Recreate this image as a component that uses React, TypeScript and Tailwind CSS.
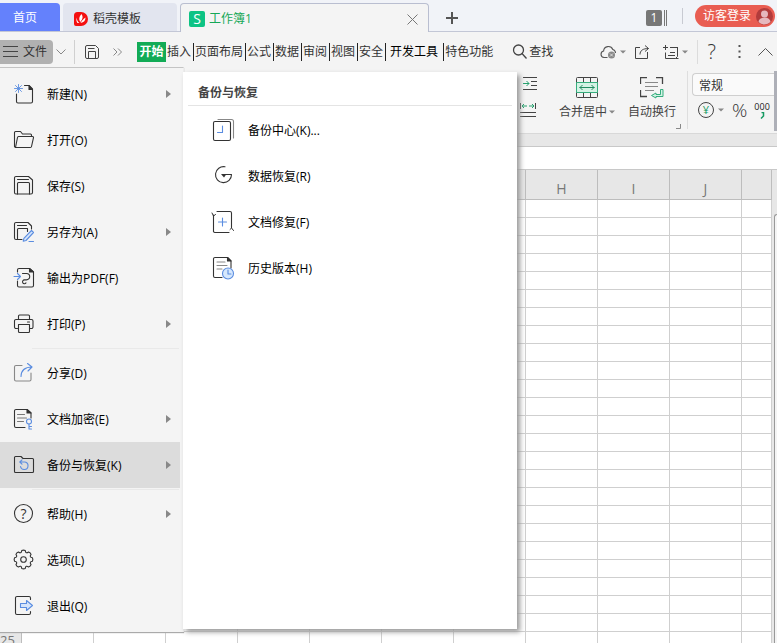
import React, { useState } from 'react';

type IconProps = { name: string };

const MENU_GROUPS = [
  [
    { icon: 'new', label: '新建(N)', more: true },
    { icon: 'open', label: '打开(O)' },
    { icon: 'save', label: '保存(S)' },
    { icon: 'saveAs', label: '另存为(A)', more: true },
    { icon: 'pdf', label: '输出为PDF(F)' },
    { icon: 'print', label: '打印(P)', more: true },
  ],
  [
    { icon: 'share', label: '分享(D)' },
    { icon: 'encrypt', label: '文档加密(E)', more: true },
    { icon: 'backup', label: '备份与恢复(K)', more: true },
  ],
  [
    { icon: 'help', label: '帮助(H)', more: true },
    { icon: 'options', label: '选项(L)' },
    { icon: 'exit', label: '退出(Q)' },
  ],
];

const BACKUP_ITEMS = [
  { icon: 'center', label: '备份中心(K)...' },
  { icon: 'recover', label: '数据恢复(R)' },
  { icon: 'repair', label: '文档修复(F)' },
  { icon: 'history', label: '历史版本(H)' },
];

const RIBBON_TABS = ['插入', '页面布局', '公式', '数据', '审阅', '视图', '安全', '开发工具', '特色功能'];
const COLUMNS = ['A', 'B', 'C', 'D', 'E', 'F', 'G', 'H', 'I', 'J', ''];
const ROWS = Array.from({ length: 25 }, (_, i) => i + 1);

// 8-tooth gear outline around (10.5, 10.5)
const GEAR = Array.from({ length: 8 }, (_, i) => {
  const at = (deg: number, r: number) => {
    const a = ((i * 45 + deg) * Math.PI) / 180;
    return `${(10.5 + r * Math.cos(a)).toFixed(2)} ${(10.5 + r * Math.sin(a)).toFixed(2)}`;
  };
  return `${i === 0 ? 'M' : 'L'}${at(-11, 9.1)} Q${at(0, 9.8)} ${at(11, 9.1)} Q${at(22.5, 5.9)} ${at(34, 9.1)}`;
}).join(' ') + ' Z';

const BLUE = '#5b8de0';

const MENU_ICONS: Record<string, React.ReactNode> = {
  new: (
    <>
      <path d="M11.500 2.500h4.500l3.500 3.500v12.500a1.500 1.500 0 0 1-1.500 1.500H5a1.500 1.500 0 0 1-1.500-1.500V11" />
      <path d="M16 2.500v4h3.500z" fill="#333" />
      <path d="M5.500 1.500v8M1.500 5.500h8M2.500 2.500l6 6M8.500 2.500l-6 6" stroke={BLUE} strokeWidth=".9" />
    </>
  ),
  open: (
    <>
      <path d="M2.500 18.500l-1-1v-14a1 1 0 0 1 1-1h5l2 2.500h8a1 1 0 0 1 1 1v1.500" />
      <path d="M5.500 7.500H19.500a1 1 0 0 1 1 1.200L18.500 17.500a1.200 1.200 0 0 1-1.200 1H2.500L4.500 8.500a1.200 1.200 0 0 1 1-1z" />
    </>
  ),
  save: (
    <>
      <path d="M3 1.500h12.500l4 3.500v12.500a1.500 1.500 0 0 1-1.500 1.500H3a1.500 1.500 0 0 1-1.500-1.500V3A1.500 1.500 0 0 1 3 1.500z" />
      <path d="M4.500 19V8.500a1 1 0 0 1 1-1h10a1 1 0 0 1 1 1V19M4.500 4.500h11" />
    </>
  ),
  saveAs: (
    <>
      <path d="M9 18.500H3A1.500 1.500 0 0 1 1.500 17V3A1.500 1.500 0 0 1 3 1.500h12l3.500 3.500v3M4.500 18.500V8.500a1 1 0 0 1 1-1h9v3M4.500 4.500h9" />
      <path d="M18.500 9.500l2 2-7.500 8-2.800.7.700-2.800zM16 20.500h4.500" stroke={BLUE} fill="#d6e5fb" />
    </>
  ),
  pdf: (
    <>
      <path d="M4.500 5V3A1.500 1.500 0 0 1 6 1.500h10.500l4 3.500v13.500a1.500 1.500 0 0 1-1.500 1.500H6a1.500 1.500 0 0 1-1.500-1.500V14" />
      <path d="M16.500 1.500V5h4z" fill="#333" />
      <path d="M9.500 6.500h4a3.200 3.200 0 0 1 0 6.400h-2a1.900 1.900 0 1 0 1.500 3" />
      <path d="M1 9.500h6.500M4.500 6.500l3 3-3 3" stroke={BLUE} />
    </>
  ),
  print: (
    <>
      <path d="M5.500 6.500V3a1 1 0 0 1 1-1h9a1 1 0 0 1 1 1v3.500M4.500 15.500H3A1.500 1.500 0 0 1 1.500 14V8A1.500 1.500 0 0 1 3 6.500h15.500A1.500 1.500 0 0 1 20 8v6a1.500 1.500 0 0 1-1.500 1.500H17" />
      <path d="M5.500 11.500h11v7a1 1 0 0 1-1 1h-9a1 1 0 0 1-1-1zM14.500 9h2" />
    </>
  ),
  share: (
    <>
      <path d="M9 3.500H3A1.500 1.500 0 0 0 1.500 5v12.500A1.500 1.500 0 0 0 3 19h13.500a1.500 1.500 0 0 0 1.500-1.500V11" stroke="#888" />
      <path d="M8 14.500c0-6 4-9.500 11-9.500M14.500 1.500L19 5l-4 4" stroke={BLUE} />
    </>
  ),
  encrypt: (
    <>
      <path d="M12 19.500H3A1.500 1.500 0 0 1 1.500 18V3A1.500 1.500 0 0 1 3 1.500h11l4 3.500v5" />
      <path d="M14 1.500V5h4z" fill="#333" />
      <path d="M4.500 6.500h7M4.500 10h9M4.500 13.500h6" stroke="#777" />
      <circle cx="16" cy="13.500" r="2.500" stroke={BLUE} />
      <path d="M16 16v5M16 18.500h2.500M16 21h2.500" stroke={BLUE} />
    </>
  ),
  backup: (
    <>
      <path d="M2.500 2.500H8L10 4.500h9.500a1 1 0 0 1 1 1v12a1 1 0 0 1-1 1h-17a1 1 0 0 1-1-1v-14a1 1 0 0 1 1-1z" />
      <path d="M7 8h5a3.800 3.800 0 1 1-4.500 4.500M9 5.800L6.800 8 9 10.200" stroke={BLUE} />
    </>
  ),
  help: (
    <>
      <circle cx="10.500" cy="10.500" r="9" />
      <text x="10.500" y="15.500" textAnchor="middle" fontSize="14" fill="#333" stroke="none">?</text>
    </>
  ),
  options: (
    <>
      <path d={GEAR} />
      <circle cx="10.500" cy="10.500" r="2.800" />
    </>
  ),
  exit: (
    <>
      <path d="M17.500 4.500V3a1.500 1.500 0 0 0-1.500-1.500H4A1.500 1.500 0 0 0 2.500 3v15A1.500 1.500 0 0 0 4 19.500h12a1.500 1.500 0 0 0 1.500-1.500v-1.500" />
      <path d="M7.500 8.500h6V5.500l6 5-6 5v-3h-6z" stroke={BLUE} fill="#d6e5fb" />
    </>
  ),
  center: (
    <>
      <path d="M5 .5h13.500a2 2 0 0 1 2 2V19" stroke="#888" />
      <rect x=".5" y="2.500" width="17" height="19" rx="1.500" />
      <path d="M9.500 7v6.500h-5" stroke={BLUE} />
    </>
  ),
  recover: (
    <>
      <path d="M12 1.800A8 8 0 1 0 18.500 9.500H10" />
      <path d="M8 9h5.500l-2.500 3.500z" fill="#333" stroke="none" />
    </>
  ),
  repair: (
    <>
      <path d="M4 .5h13A1.500 1.500 0 0 1 18.500 2v14.500M.5 4v15.500A1.500 1.500 0 0 0 2 21.500h14" />
      <path d="M-1 2l1.500 3 2-1.500M20.500 19.500l-2-2.500-1.500 1.500" strokeWidth="1" />
      <path d="M9.500 7v8M5.500 11h8" stroke={BLUE} />
    </>
  ),
  history: (
    <>
      <path d="M9 20.500H2A1.500 1.500 0 0 1 .5 19V2A1.500 1.500 0 0 1 2 .5h12.500l3.500 3.500v7" />
      <path d="M14.500.5V4H18z" fill="#333" />
      <path d="M4 5h8M4 8.500h10M4 12h5" stroke="#888" />
      <circle cx="15" cy="16.500" r="5.500" stroke={BLUE} fill="#d6e8fd" />
      <path d="M15 13v4h3" stroke={BLUE} />
    </>
  ),
};

function MenuIcon({ name }: IconProps) {
  return (
    <svg width="22" height="22" viewBox="0 0 22 22" fill="none" stroke="#333" strokeWidth="1.100" strokeLinecap="round" strokeLinejoin="round" className="shrink-0 overflow-visible">
      {MENU_ICONS[name]}
    </svg>
  );
}

function Caret() {
  return (
    <svg width="6" height="4" viewBox="0 0 6 4" className="shrink-0">
      <path d="M0 .5h6L3 3.500z" fill="#888" />
    </svg>
  );
}

function TitleTabs() {
  return (
    <header className="flex h-8 shrink-0 items-end bg-[#f1f3f8] shadow-[inset_0_-1px_0_#c3c7d6]">
      <button className="mb-px h-7 w-[60px] rounded-tr bg-[#6481fc] pr-2.5 pt-0.5 text-white">首页</button>
      <button className="ml-[3px] mb-px flex h-7 w-[114px] items-center gap-1 rounded-t bg-[#e2e5ef] pl-2.5 pt-1 text-[#333]">
        <svg width="16" height="16" viewBox="0 0 16 16" className="shrink-0">
          <path d="M4.500 1H8a7 7 0 0 1 0 14H3a2 2 0 0 1-2-2V4.500A3.500 3.500 0 0 1 4.500 1z" fill="#f40f0f" />
          <path d="M8.500 3c1.800 2.500 1.500 5-1.200 8C5.500 8.500 6 5.500 8.500 3zM4 6.500c-.3 2 .3 3.800 2.300 5.500H4.500C3.300 10.500 3 8.500 4 6.500zM12.500 6.500c0 3-1.500 5-5 5.500 1.500-2.500 2.500-4 5-5.500z" fill="#fff" />
        </svg>
        <span className="whitespace-nowrap">稻壳模板</span>
      </button>
      <div className="ml-[3px] flex h-[29px] w-[249px] items-center rounded-t border border-b-0 border-[#b9bed0] bg-[#f4f4f4] pl-2 pr-2.5 pt-0.5">
        <span className="flex size-4 items-center justify-center rounded-xs bg-[#0dc384] text-[14px] leading-4 text-white">S</span>
        <button className="ml-1 text-[#16a858]">工作簿1</button>
        <button aria-label="关闭" className="ml-auto">
          <svg width="11" height="11" viewBox="0 0 11 11" stroke="#777" fill="none">
            <path d="M.5.5l10 10M10.500.5l-10 10" />
          </svg>
        </button>
      </div>
      <button aria-label="新建标签" className="mb-2 ml-[17px]">
        <svg width="12" height="12" viewBox="0 0 12 12" stroke="#555" strokeWidth="2">
          <path d="M0 6h12M6 0v12" />
        </svg>
      </button>
      <div className="ml-auto flex h-8 items-center pr-0.5">
        <span className="mt-1 flex size-4 items-center justify-center rounded-xs bg-[#777] text-white">1</span>
        <span className="ml-0.5 mt-1 h-4 w-[3px] border-x border-[#777]" />
        <span className="ml-[15px] h-4 w-px bg-[#c8cad2]" />
        <button className="ml-3 flex h-[22px] w-20 items-center justify-between rounded-full bg-[#e95d52] pl-2 pr-0.5 text-white">
          <span className="whitespace-nowrap">访客登录</span>
          <svg width="17" height="17" viewBox="0 0 17 17">
            <circle cx="8.500" cy="8.500" r="8.500" fill="#b23c3c" />
            <circle cx="8.500" cy="6" r="3.500" fill="#e6b8be" />
            <path d="M2.500 14a6 4.500 0 0 1 12 0 8.500 8.500 0 0 1-12 0z" fill="#e6b8be" />
          </svg>
        </button>
      </div>
    </header>
  );
}

function MenuBar({ onToggle }: { onToggle: () => void }) {
  return (
    <nav className="flex h-[35px] shrink-0 items-center bg-[#f4f4f4] pt-1 text-[#333]">
      <button onClick={onToggle} className="flex h-6 w-[53px] shrink-0 items-center gap-[5px] rounded-r bg-[#b1b1b1] pl-[3px]">
        <svg width="15" height="11" viewBox="0 0 15 11" stroke="#444">
          <path d="M0 .5h15M0 5.500h15M0 10.500h15" />
        </svg>
        文件
      </button>
      <svg width="10" height="6" viewBox="0 0 10 6" fill="none" stroke="#888" className="ml-[3px] shrink-0">
        <path d="M.5.5L5 5 9.500.5" />
      </svg>
      <span className="ml-2 h-6 w-px shrink-0 bg-[#d0d0d0]" />
      <button aria-label="保存" className="ml-2.5">
        <svg width="14" height="14" viewBox="0 0 14 14" fill="none" stroke="#444">
          <path d="M2 .5h8.500l3 3V12a1.500 1.500 0 0 1-1.500 1.500H2A1.500 1.500 0 0 1 .5 12V2A1.500 1.500 0 0 1 2 .5zM3.500 13V6.500h7V13M3 3.500h6.500" />
        </svg>
      </button>
      <svg width="9" height="8" viewBox="0 0 9 8" fill="none" stroke="#888" className="ml-3.5 shrink-0">
        <path d="M.5.5L4 4 .5 7.500M5 .5L8.500 4 5 7.500" />
      </svg>
      <button className="ml-[15px] h-5 w-[29px] shrink-0 bg-[#12ab56] font-bold text-white">开始</button>
      {RIBBON_TABS.map((tab, i) => (
        <button
          key={tab}
          className={`h-[18px] shrink-0 whitespace-nowrap border-[#222] leading-[18px] ${
            tab === '开发工具' ? 'pl-1 pr-[5px] text-black' : 'pl-px pr-0.5'
          } ${i < RIBBON_TABS.length - 1 ? 'border-r' : ''}`}
        >
          {tab}
        </button>
      ))}
      <button className="ml-[17px] flex shrink-0 items-center gap-0.5">
        <svg width="15" height="15" viewBox="0 0 15 15" fill="none" stroke="#444" strokeWidth="1.300">
          <circle cx="6.500" cy="6" r="5" />
          <path d="M10 9.500l4.500 5" />
        </svg>
        查找
      </button>
      <div className="ml-auto flex shrink-0 items-center pr-1">
        <svg width="17" height="14" viewBox="0 0 17 14" fill="none" stroke="#555" strokeWidth="1.100">
          <path d="M7.500 12.500H4A3.300 3.300 0 0 1 3.600 6 4.800 4.800 0 0 1 12.800 4.500 3.800 3.800 0 0 1 15.500 8" />
          <circle cx="11.500" cy="10" r="3.500" fill="#888" stroke="none" />
          <path d="M10 8.500l3 3M13 8.500l-3 3" stroke="#eee" strokeWidth=".8" />
        </svg>
        <span className="ml-[3px]"><Caret /></span>
        <svg width="14" height="14" viewBox="0 0 14 14" fill="none" stroke="#444" className="ml-[9px]">
          <path d="M5 2.500H.5v11h12V7M5 9.500c0-4 3-6 8.500-6M10 .5l3.500 3-3.500 3" />
        </svg>
        <svg width="16" height="14" viewBox="0 0 16 14" fill="none" stroke="#444" className="ml-3.5">
          <path d="M2.500 0v5M0 2.500h5M7 2.500h8M14.500 2.500v9l-2 2H2.500V7.500M7 7.500h5M5 10.500h7M12.500 13.500h3" />
        </svg>
        <span className="ml-[3px]"><Caret /></span>
        <span className="ml-[9px] h-6 w-px bg-[#dcdcdc]" />
        <button className="ml-2.5 text-[20px] leading-5 font-light text-[#333]">?</button>
        <svg width="3" height="13" viewBox="0 0 3 13" fill="#555" className="ml-[22px]">
          <path d="M.5 0h2v2h-2zM.5 5.500h2v2h-2zM.5 11h2v2h-2z" />
        </svg>
        <svg width="15" height="8" viewBox="0 0 15 8" fill="none" stroke="#555" className="ml-[17px]">
          <path d="M.5 7.500l7-7 7 7" />
        </svg>
      </div>
    </nav>
  );
}

function Ribbon() {
  return (
    <div className="flex h-[67px] shrink-0 justify-end border-b border-[#d8d8d8] bg-[#f4f4f4] text-[#444]">
      <div className="flex flex-col gap-3 pt-2.5">
        <svg width="18" height="14" viewBox="0 0 18 14" fill="none" stroke="#444">
          <path d="M3 .5h14M11 4.500h6M11 8.500h6M3 12.500h14" />
          <path d="M3 6.500h6M6.500 4L9 6.500 6.500 9" stroke="#25a06d" />
        </svg>
        <svg width="18" height="15" viewBox="0 0 18 15" fill="none" stroke="#444">
          <path d="M.5 0v6M15.500 0v6M0 9.500h16M0 13.500h16" />
          <path d="M2 3h5M4 1L2 3l2 2M9 3h5M12 1l2 2-2 2" stroke="#25a06d" />
        </svg>
      </div>
      <button className="ml-[21px] flex flex-col items-center gap-[5px] self-start pt-2.5">
        <svg width="22" height="22" viewBox="0 0 22 22" fill="none" stroke="#444">
          <rect x=".5" y=".5" width="21" height="20" rx="1" />
          <path d="M7.500.5V6M14.500.5V6M7.500 15v5.500M14.500 15v5.500" />
          <path d="M.5 5.500h21v10H.5z" fill="#d4f3e5" stroke="#35ad7d" />
          <path d="M3.500 10.500h15M6.500 8L4 10.500 6.500 13M15.500 8l2.500 2.500-2.500 2.500" stroke="#238c62" />
        </svg>
        <span className="flex items-center gap-0.5">合并居中<Caret /></span>
      </button>
      <button className="ml-[13px] flex flex-col items-center gap-[5px] self-start pt-2.5">
        <svg width="24" height="22" viewBox="0 0 24 22" fill="none" stroke="#444">
          <path d="M7 .5H.5V7M16 .5h6.500V7M.5 13v6.500H7" strokeWidth="1.300" />
          <path d="M5 5.500h13M5 9.500h13M5 13.500h9" stroke="#888" />
          <path d="M20.500 12.500h2.500v7h-7v1.500l-4.500-2.500 4.500-2.500v1.500h4.500z" fill="#d4f3e5" stroke="#35ad7d" />
        </svg>
        <span>自动换行</span>
      </button>
      <svg width="5" height="5" viewBox="0 0 5 5" fill="none" stroke="#888" className="mb-1 self-end">
        <path d="M4.500 0v4.500H0" />
      </svg>
      <span className="ml-1.5 h-[58px] w-px self-center bg-[#dedede]" />
      <div className="ml-1 mt-1.5 flex w-[82px] flex-col">
        <input
          aria-label="数字格式"
          defaultValue="常规"
          className="h-[23px] w-full rounded-l border border-r-0 border-[#cfcfcf] bg-[#fafafa] pl-1.5 text-[#333] outline-none"
        />
        <div className="flex items-center pl-1.5 pt-1">
          <button className="flex size-4 shrink-0 items-center justify-center rounded-full border border-[#444] text-[11px] leading-4 text-[#159a62]">¥</button>
          <span className="ml-1"><Caret /></span>
          <button className="ml-2 text-[19px] leading-5 font-light text-[#333]">%</button>
          <button className="ml-[7px] h-5 text-[9px] leading-[10px] text-[#222]">
            000
            <svg width="5" height="7" viewBox="0 0 5 7" fill="none" stroke="#159a62" className="mx-auto">
              <path d="M1.500.5h2V4L1 6.500" strokeWidth="1.500" />
            </svg>
          </button>
        </div>
      </div>
      <span className="mt-1 h-[60px] w-[3px] bg-[#aeb0b8]" />
    </div>
  );
}

function Sheet() {
  return (
    <div className="flex min-h-0 flex-1 overflow-hidden bg-white">
      <table className="h-fit min-w-0 flex-1 table-fixed border-separate border-spacing-0">
        <colgroup>
          <col className="w-[22px]" />
          {COLUMNS.map((c, i) => (
            <col key={i} className={c ? 'w-[72px]' : 'w-auto'} />
          ))}
        </colgroup>
        <thead>
          <tr>
            <th className="h-[30px] border-b border-r border-[#bdbdbd] bg-[#e7e7e7] p-0" />
            {COLUMNS.map((c, i) => (
              <th key={i} className="h-[30px] border-b border-r border-[#bdbdbd] bg-[#e7e7e7] p-0 pt-2 text-[14px] leading-5 font-normal text-[#777]">
                {c}
              </th>
            ))}
          </tr>
        </thead>
        <tbody>
          {ROWS.map((row) => (
            <tr key={row}>
              <th className="h-[18px] overflow-hidden border-b border-r border-[#bdbdbd] bg-[#e7e7e7] p-0 text-left text-[13px] leading-[17px] font-normal text-[#777]">
                {row}
              </th>
              {COLUMNS.map((_, i) => (
                <td key={i} className="h-[18px] border-b border-r border-[#cfcfcf] p-0" />
              ))}
            </tr>
          ))}
        </tbody>
      </table>
      <div className="w-[5px] shrink-0 bg-[#e7e7e7] pl-0.5 pt-11">
        <div className="h-full rounded-tl border-l border-t border-[#999] bg-[#f4f4f4]" />
      </div>
    </div>
  );
}

function FileMenu() {
  const [active, setActive] = useState('backup');

  return (
    <div className="absolute left-0 top-[67px] flex items-start text-black">
      <div className="w-[184px] border-r border-t border-[#c4c4c4] border-r-[#ededed] bg-[#f4f4f4] pb-[3px] pt-[3px] shadow-[0_1px_1px_#aaa]">
        {MENU_GROUPS.map((group, g) => (
          <div key={g}>
            {g > 0 && <div className="my-px ml-8 mr-1 h-px bg-[#e9e9e9]" />}
            {group.map((item) => (
              <button
                key={item.icon}
                onClick={() => setActive(item.icon)}
                className={`flex h-[46px] w-[180px] items-center gap-3 pl-[13px] pr-[9px] text-left ${
                  active === item.icon ? 'bg-[#dcdcdc]' : ''
                }`}
              >
                <MenuIcon name={item.icon} />
                <span className="flex-1 whitespace-nowrap pt-0.5">{item.label}</span>
                {item.more && (
                  <svg width="5" height="8" viewBox="0 0 5 8">
                    <path d="M0 0l5 4-5 4z" fill="#888" />
                  </svg>
                )}
              </button>
            ))}
          </div>
        ))}
      </div>
      <div className="-ml-px mt-[5px] h-[557px] w-[334px] bg-white shadow-[3px_3px_5px_#999]">
        <h2 className="mx-[5px] h-[34px] border-b border-[#e4e4e4] pl-2.5 pt-3 leading-[18px] font-bold text-[#444]">备份与恢复</h2>
        <div className="pt-px">
          {BACKUP_ITEMS.map((item) => (
            <button key={item.icon} className="flex h-[46px] w-full items-center gap-[13px] pl-[30px] text-left">
              <MenuIcon name={item.icon} />
              <span className="pt-0.5">{item.label}</span>
            </button>
          ))}
        </div>
      </div>
    </div>
  );
}

export default function App() {
  const [menuOpen, setMenuOpen] = useState(true);

  return (
    <div className="relative flex h-screen flex-col overflow-hidden bg-white font-['Open_Sans','Noto_Sans_CJK_SC',sans-serif] text-[12px] leading-4">
      <TitleTabs />
      <MenuBar onToggle={() => setMenuOpen(!menuOpen)} />
      <Ribbon />
      <div className="h-3 shrink-0 bg-[#e7e7e7]" />
      <input aria-label="编辑栏" className="h-6 shrink-0 border-y border-[#c8c8c8] bg-white px-2 outline-none" />
      <Sheet />
      {menuOpen && <FileMenu />}
    </div>
  );
}
